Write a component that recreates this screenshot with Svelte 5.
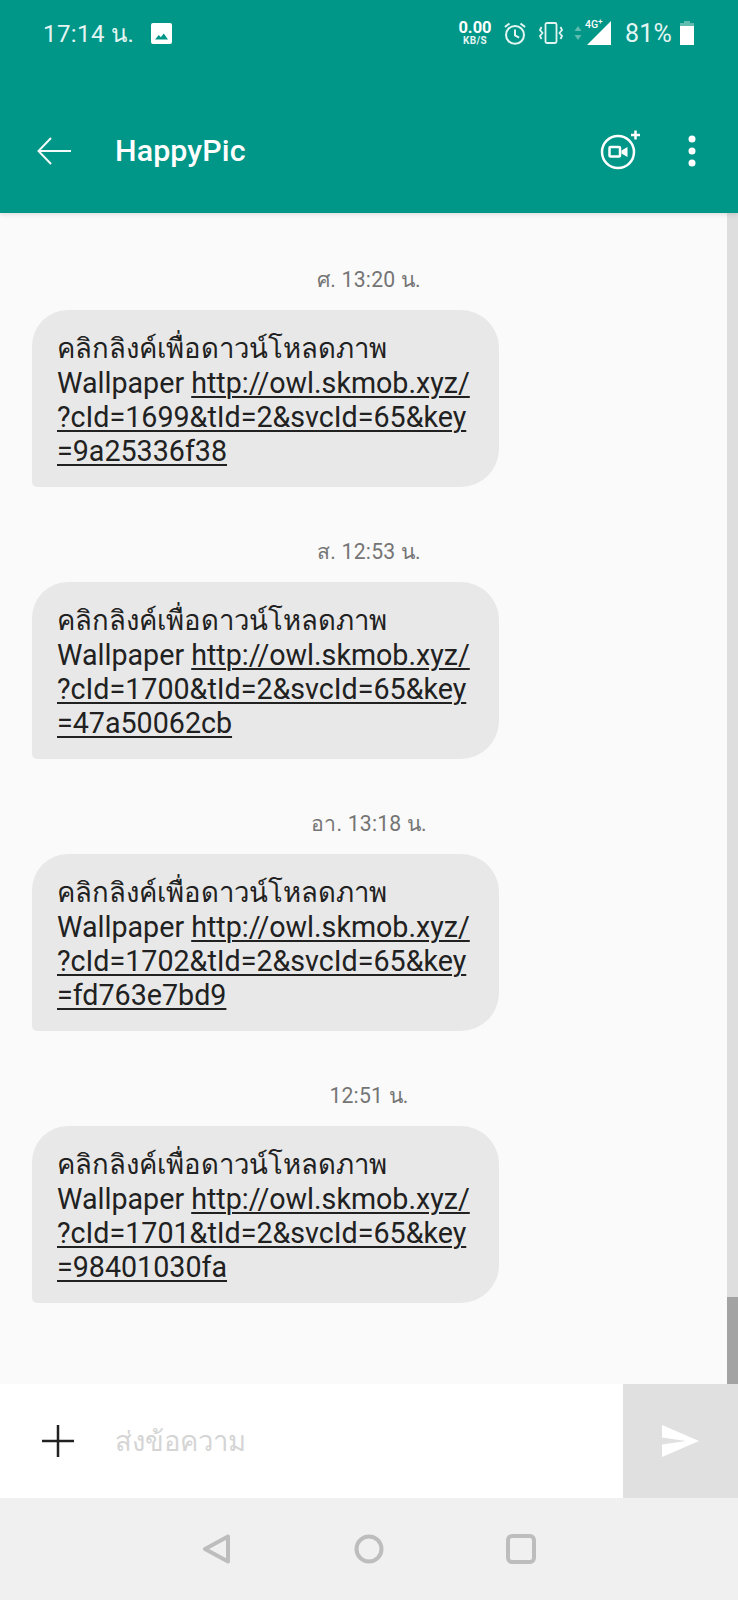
<script>
  const messages = [
    { time: 'ศ. 13:20 น.', id: '1699', key: '9a25336f38' },
    { time: 'ส. 12:53 น.', id: '1700', key: '47a50062cb' },
    { time: 'อา. 13:18 น.', id: '1702', key: 'fd763e7bd9' },
    { time: '12:51 น.', id: '1701', key: '98401030fa' }
  ];
</script>

<div class="phone">
  <header class="appbar">
    <div class="status">
      <span class="clock">17:14 น.</span>
      <svg class="pic" width="21" height="21" viewBox="0 0 21 21"><path fill="#fff" d="M2 0h17a2 2 0 0 1 2 2v17a2 2 0 0 1-2 2H2a2 2 0 0 1-2-2V2a2 2 0 0 1 2-2zm2 16.500h13l-4.200-6-3 3.800-2-2.300z" fill-rule="evenodd"/></svg>
      <span class="spacer"></span>
      <span class="speed"><b>0.00</b><i>KB/S</i></span>
      <svg class="alarm" width="22" height="23" viewBox="0 0 24 25" fill="none" stroke="#e3f5f2" stroke-width="2.200"><circle cx="12" cy="14" r="9.800"/><path d="M12 8v6.500l4.500 2.500M1 5.500 6 1.500M23 5.500 18 1.500"/></svg>
      <svg class="vibrate" width="24" height="22" viewBox="0 0 24 22" fill="none" stroke="#e3f5f2" stroke-width="1.800"><rect x="6.500" y="1" width="11" height="20" rx="1.500"/><path d="M2.500 5 1 8l2.500 3L1 14l1.500 3M21.500 5 23 8l-2.500 3L23 14l-1.500 3"/></svg>
      <svg class="arrows" width="8" height="14" viewBox="0 0 8 14"><path fill="#5fbcae" d="M4 0l3.500 5h-7zM4 14 .5 9h7z"/></svg>
      <span class="signal">
        <svg width="24" height="24" viewBox="0 0 24 24"><path fill="#fff" d="M24 0v24H0z"/></svg>
        <span class="lte">4G<sup>+</sup></span>
      </span>
      <span class="battery-text">81%</span>
      <svg class="battery" width="14" height="24" viewBox="0 0 14 24"><path fill="#5fbcae" d="M4 0h6v2h4v5H0V2h4z"/><path fill="#fff" d="M0 5h14v19H0z"/></svg>
    </div>
    <div class="toolbar">
      <svg class="back" width="34" height="28" viewBox="0 0 34 28" fill="none" stroke="#f2fbf9" stroke-width="2"><path d="M34 14H2M14 1 1.500 14 14 27"/></svg>
      <h1>HappyPic</h1>
      <svg class="video" width="42" height="42" viewBox="0 0 42 42" fill="none"><circle cx="18" cy="24" r="16" stroke="#fff" stroke-width="2.500"/><rect x="9.500" y="19" width="10.500" height="9.500" rx="1" stroke="#fff" stroke-width="2.500"/><path fill="#fff" d="m21.500 22.500 6-3.500v10l-6-3.500z"/><path stroke="#fff" stroke-width="2.500" d="M35.500 2.500v9M31 7h9"/></svg>
      <svg class="more" width="8" height="32" viewBox="0 0 8 32"><circle cx="4" cy="4" r="3.500" fill="#fff"/><circle cx="4" cy="16" r="3.500" fill="#fff"/><circle cx="4" cy="28" r="3.500" fill="#fff"/></svg>
    </div>
  </header>

  <main class="thread">
    {#each messages as m}
      <article class="message">
        <div class="time">{m.time}</div>
        <div class="bubble">
          <div class="thai">คลิกลิงค์เพื่อดาวน์โหลดภาพ</div>
          <div>Wallpaper <u>http://owl.skmob.xyz/</u></div>
          <div><u>?cId={m.id}&amp;tId=2&amp;svcId=65&amp;key</u></div>
          <div><u>={m.key}</u></div>
        </div>
      </article>
    {/each}
    <div class="track"><div class="thumb"></div></div>
  </main>

  <div class="composer">
    <svg class="plus" width="32" height="32" viewBox="0 0 32 32"><path stroke="#212121" stroke-width="2.500" d="M16 0v32M0 16h32"/></svg>
    <span class="placeholder">ส่งข้อความ</span>
    <div class="send">
      <svg width="37" height="32" viewBox="0 0 37 32"><path fill="#fff" d="M0 0 37 16 0 32V19.500l24-3.500-24-3.500z"/></svg>
    </div>
  </div>

  <nav class="navbar">
    <svg width="30" height="30" viewBox="0 0 30 30" fill="none" stroke="#bdbdbd" stroke-width="4" stroke-linejoin="round"><path d="M26 2.500v25L3 15z"/></svg>
    <svg width="30" height="30" viewBox="0 0 30 30" fill="none" stroke="#bdbdbd" stroke-width="4"><circle cx="15" cy="15" r="12.500"/></svg>
    <svg width="30" height="30" viewBox="0 0 30 30" fill="none" stroke="#bdbdbd" stroke-width="4"><rect x="2" y="2" width="26" height="26" rx="4"/></svg>
  </nav>
</div>

<style>
  :global(body) { margin: 0; background: #fafafa; }
  .phone {
    width: 738px; height: 1600px; display: flex; flex-direction: column; overflow: hidden;
    font-family: Roboto, "Noto Sans", "DejaVu Sans", sans-serif;
  }
  .appbar { height: 213px; flex: none; background: #009688; color: #fff; display: flex; flex-direction: column; box-shadow: 0 2px 4px rgba(0,0,0,.1); position: relative; z-index: 1; }
  .status { height: 66px; padding: 0 44px 0 43px; display: flex; align-items: center; color: #e3f5f2; }
  .status svg { flex: none; }
  .clock { font-size: 24px; letter-spacing: .4px; width: 108px; white-space: nowrap; }
  .spacer { flex: 1; }
  .speed { display: flex; flex-direction: column; align-items: center; width: 32px; line-height: 1; }
  .speed b { font-size: 16.500px; font-weight: 700; color: #fff; line-height: 16px; }
  .speed i { font-style: normal; font-weight: 700; font-size: 10px; line-height: 10px; letter-spacing: .3px; }
  .alarm { margin-left: 13px; }
  .vibrate { margin-left: 13px; }
  .arrows { margin-left: 11px; }
  .signal { position: relative; display: block; width: 24px; height: 24px; margin-left: 5px; }
  .signal svg { display: block; }
  .lte { position: absolute; left: -2px; top: -2px; font-size: 10.500px; font-weight: 500; color: #fff; line-height: 12px; }
  .lte sup { font-size: 8px; line-height: 0; }
  .battery-text { font-size: 25px; margin-left: 14px; letter-spacing: .2px; white-space: nowrap; }
  .battery { margin-left: 8px; }
  .toolbar { flex: 1; display: flex; align-items: center; padding: 22px 0 0 37px; }
  .back { flex: none; }
  h1 { margin: 0 0 0 44px; font-size: 30.400px; font-weight: 500; flex: 1; letter-spacing: .1px; }
  .video { margin-right: 46px; margin-top: -3px; }
  .more { margin-right: 42px; }

  .thread { flex: 1; background: #fafafa; padding: 2px 0 0 32px; position: relative; }
  .message { height: 272px; display: flex; flex-direction: column; }
  .time { margin-top: 49px; height: 32px; line-height: 32px; width: 738px; margin-left: -32px; text-align: center; font-size: 21.200px; color: #757575; letter-spacing: .2px; flex: none; }
  .bubble { margin-top: 14px; width: 467px; height: 177px; flex: none; box-sizing: border-box; padding: 22px 0 0 25px; background: #e8e8e8; border-radius: 36px 38px 38px 5px; font-size: 28.650px; line-height: 34px; color: #212121; white-space: nowrap; }
  .thai { font-size: 27.500px; }
  .bubble u { text-underline-offset: 3px; text-decoration-thickness: 2px; }
  .track { position: absolute; right: 0; top: 0; bottom: 0; width: 11px; background: #dedede; display: flex; flex-direction: column; justify-content: flex-end; }
  .thumb { height: 87px; background: #a3a3a3; }

  .composer { height: 114px; flex: none; background: #fff; display: flex; align-items: center; padding-left: 42px; }
  .plus { flex: none; }
  .placeholder { margin-left: 41px; font-size: 27.400px; color: #d5d5d5; flex: 1; }
  .send { width: 115px; height: 100%; background: #e0e0e0; display: flex; align-items: center; justify-content: center; }

  .navbar { height: 102px; flex: none; background: #f0f0f0; display: flex; align-items: center; justify-content: center; gap: 122px; }
</style>
